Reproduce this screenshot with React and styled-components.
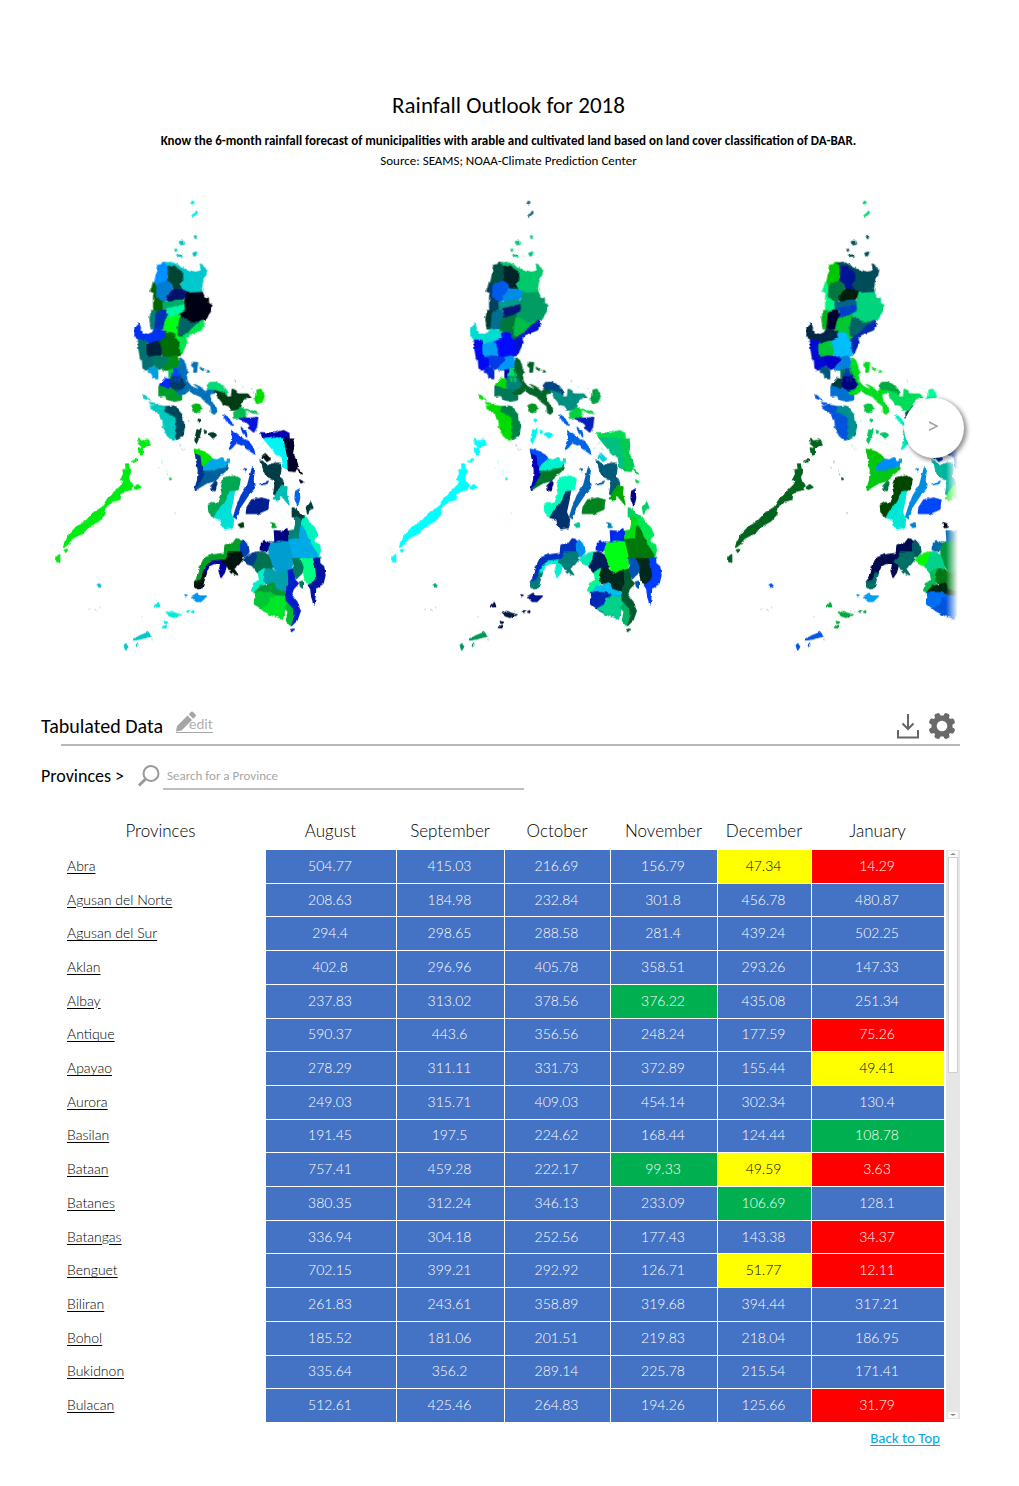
import React from "react";
import styled, { createGlobalStyle } from "styled-components";

const GlobalStyle = createGlobalStyle`
  * { box-sizing: border-box; }
  body {
    margin: 0;
    background: #fff;
    color: #000;
    font-family: Calibri, Carlito, Lato, sans-serif;
  }
`;

const Page = styled.main`
  padding: 89px 59px 36px 41px;
`;

const Intro = styled.header`
  display: flex;
  flex-direction: column;
  align-items: center;
  text-align: center;
  padding-left: 16px;
`;

const Title = styled.h1`
  margin: 0 0 10px;
  font-size: 23px;
  line-height: 32px;
  font-weight: 400;
`;

const Lead = styled.p`
  margin: 0;
  font-size: 13px;
  line-height: 20px;
  font-weight: ${(p) => (p.$strong ? 700 : 400)};
`;

const Carousel = styled.section`
  position: relative;
  margin-top: 19px;
`;

const Track = styled.div`
  display: flex;
  overflow: hidden;
  mask-image: linear-gradient(to right, #000 calc(100% - 14px), transparent calc(100% - 2px));
`;

const MapSvg = styled.svg`
  flex: none;
  width: 336px;
  height: 470px;
  display: block;
`;

const NextButton = styled.button`
  position: absolute;
  right: -4px;
  top: 208px;
  width: 60px;
  height: 60px;
  padding: 0 2px 4px 0;
  border: 0;
  border-radius: 50%;
  background: #fff;
  box-shadow: 2px 2px 4px 1px rgba(0, 0, 0, 0.42);
  color: #a6a6a6;
  font: inherit;
  font-size: 25px;
  line-height: 32px;
`;

const SectionBar = styled.div`
  display: flex;
  align-items: center;
  height: 40px;
  margin-top: 46px;
`;

const SectionTitle = styled.h2`
  margin: 0;
  font-size: 20px;
  line-height: 32px;
  font-weight: 400;
`;

const EditLink = styled.a`
  display: flex;
  align-items: flex-end;
  height: 22px;
  margin: 0 0 8px 13px;
  border-bottom: 1px solid #a6a6a6;
  color: #b0b0b0;
  font-size: 15px;
  line-height: 16px;
  text-decoration: none;
  svg { margin-right: -8px; align-self: flex-start; }
`;

const Tools = styled.div`
  display: flex;
  gap: 8px;
  margin-left: auto;
  padding-right: 4px;
`;

const IconButton = styled.button`
  display: flex;
  padding: 0;
  border: 0;
  background: none;
`;

const Rule = styled.hr`
  margin: -2px 0 0 20px;
  border: 0;
  height: 2px;
  background: #b8b8b8;
`;

const SearchRow = styled.div`
  display: flex;
  align-items: center;
  height: 28px;
  margin-top: 16px;
`;

const SearchLabel = styled.label`
  font-size: 18px;
  line-height: 24px;
`;

const SearchIcon = styled.svg`
  width: 24px;
  height: 24px;
  margin-left: 13px;
`;

const SearchInput = styled.input`
  flex: 0 1 361px;
  height: 28px;
  margin-left: 2px;
  padding: 0 4px;
  border: 0;
  border-bottom: 2px solid #bfbfbf;
  font: inherit;
  font-size: 13px;
  &::placeholder { color: #a6a6a6; opacity: 1; }
`;

const TableArea = styled.div`
  display: flex;
  align-items: flex-end;
  gap: 1px;
  padding-left: 16px;
  margin-top: 24px;
`;

const DataTable = styled.table`
  flex: 1;
  height: 609px;
  table-layout: fixed;
  border-collapse: separate;
  border-spacing: 0;
  font-family: Lato, Carlito, sans-serif;
  font-weight: 300;
`;

const MonthHead = styled.th`
  height: 36px;
  padding: 0 2px 2px 0;
  font-size: 17px;
  line-height: 24px;
  font-weight: 300;
`;

const NameCell = styled.th`
  padding: 0 10px 2px;
  text-align: left;
  font-size: 14px;
  line-height: 16px;
  font-weight: 300;
  a { color: #000; text-underline-offset: 2px; }
`;

const tones = {
  blue: ["#4472c4", "#fff"],
  green: ["#00b050", "#fff"],
  yellow: ["#ffff00", "#000"],
  red: ["#ff0000", "#fff"],
};

const ValueCell = styled.td`
  padding: 0 2px 1px 0;
  border-right: 1px solid #fff;
  border-bottom: 1px solid #fff;
  background: ${(p) => tones[p.$tone][0]};
  color: ${(p) => tones[p.$tone][1]};
  text-align: center;
  font-size: 14px;
  line-height: 16px;
`;

const ScrollBar = styled.div`
  display: flex;
  flex-direction: column;
  width: 14px;
  height: 569px;
  margin-bottom: 4px;
  padding: 1px 2px;
  background: #e6e6e6;
`;

const ScrollThumb = styled.div`
  height: 216px;
  border: 1px solid #d0d0d0;
  background: #fff;
`;

const ScrollArrow = styled.div`
  display: flex;
  align-items: center;
  justify-content: center;
  height: 6px;
  margin-top: ${(p) => (p.$end ? "auto" : 0)};
  background: #fafafa;
  &::before {
    content: "";
    border: solid transparent;
    border-width: 0 3px;
    ${(p) => (p.$end ? "border-top: 2px solid #888;" : "border-bottom: 2px solid #888;")}
  }
`;

const Footer = styled.footer`
  display: flex;
  justify-content: flex-end;
  padding: 5px 20px 0 0;
  a {
    color: #00a8e8;
    font-size: 15px;
    line-height: 20px;
    text-underline-offset: 2px;
  }
`;

/* Each province: outline, then its fill in August, September and October. */
const north = [
  ["M350,226 362,224 366,217 378,219 381,228 382,262 378,274 362,280 346,288 340,284 344,264 348,240Z", "#0090ff", "#005046", "#00c800"],
  ["M374,219 392,217 406,224 420,234 440,240 462,247 474,245 480,236 478,222 484,226 490,236 497,242 494,252 486,262 484,280 481,296 484,310 440,310 430,298 422,297 414,284 416,275 425,262 424,244 410,238 400,228 392,232 382,228Z", "#00c8cc", "#00c86c", "#004c58"],
  ["M382,228 392,232 400,228 410,238 424,244 425,262 416,275 414,284 422,297 408,294 398,297 394,282 379,276 382,262Z", "#004632", "#002428", "#001496"],
  ["M346,288 362,280 378,274 388,280 394,292 392,304 382,318 378,330 366,337 352,328 342,318 344,306Z", "#007cd0", "#005aec", "#007840"],
  ["M338,278 344,286 344,306 342,318 352,328 366,337 368,352 360,362 346,368 342,380 338,352 338,318 340,308 330,304 332,292Z", "#006400", "#004064", "#00f582"],
  ["M392,304 400,297 420,299 434,304 440,318 430,322 424,332 402,332 386,337 379,330 382,318Z", "#00146e", "#008ce6", "#001e0a"],
  ["M366,337 386,337 402,332 424,330 432,336 432,346 406,350 396,354 382,356 372,366 368,360Z", "#00ac66", "#009c8c", "#00648c"],
  ["M382,356 396,352 432,344 434,362 416,374 412,378 400,380 382,386 376,380Z", "#00f5a0", "#001878", "#0040c8"],
  ["M438,310 484,308 490,322 502,324 502,340 512,346 508,364 500,376 494,390 476,394 462,398 448,400 434,388 416,382 418,372 434,364 432,330Z", "#000014", "#009c64", "#00d47c"],
  ["M332,362 342,362 346,372 344,392 340,416 330,416 327,384Z", "#008278", "#003c32", "#00b41e"],
  ["M346,370 362,360 374,362 376,384 370,400 366,416 350,420 342,414 344,392Z", "#0032b4", "#007090", "#000032"],
  ["M376,386 400,380 418,376 418,400 412,414 416,430 426,440 410,452 400,432 376,428 368,416 372,400Z", "#00ff14", "#00783c", "#00c832"],
  ["M418,382 436,388 448,400 478,395 462,408 450,420 426,440 412,436 412,412Z", "#006464", "#00be46", "#006468"],
  ["M486,394 489,408 480,420 460,428 444,434 434,446 438,458 430,474 424,488 416,496 408,486 414,470 410,452 426,440 450,420 464,406Z", "#00e650", "#0014c8", "#0028b4"],
  ["M282,412 293,402 298,412 297,424 306,430 320,434 334,428 340,418 374,424 377,444 366,452 340,456 326,462 314,452 300,450 290,446 282,440Z", "#0032f0", "#00dcd2", "#002846"],
  ["M292,450 314,452 318,464 320,484 328,500 338,510 334,530 326,536 314,540 306,534 304,508 298,502 294,478Z", "#007070", "#000af0", "#000ad2"],
  ["M318,464 326,462 340,456 354,454 364,474 362,492 346,500 326,502 318,484Z", "#002040", "#00a0f0", "#00c832"],
  ["M374,428 398,430 404,446 412,456 414,472 416,496 400,500 384,502 364,498 364,474 354,456 366,450 377,444Z", "#006e00", "#000aff", "#00beff"],
  ["M326,502 346,498 364,500 380,504 384,514 370,530 354,538 340,526 338,512Z", "#007c64", "#003ce6", "#0000c8"],
  ["M384,502 404,498 412,506 414,524 404,534 384,540 364,540 370,528 384,514Z", "#009018", "#0096f5", "#0082dc"],
  ["M326,534 342,530 350,542 350,566 336,564 334,552 322,546Z", "#00a0e0", "#0028dc", "#005a78"],
  ["M384,540 396,538 394,556 392,572 384,562Z", "#00c850", "#0000b4", "#00785a"],
  ["M400,536 414,532 420,548 420,562 402,560 392,556Z", "#0046ff", "#00dc64", "#0041b4"],
  ["M356,584 372,566 386,568 390,586 384,596 366,596Z", "#0028ff", "#00dc00", "#003c3c"],
  ["M392,560 420,562 430,566 438,582 428,598 408,604 392,596 388,582Z", "#003c64", "#008278", "#000082"],
  ["M401,564h4v10h-4ZM412,564h4v10h-4Z", "#0046c8", "#00c85a", "#001e8c"],
  ["M354,588 366,594 386,596 408,604 422,616 420,630 400,634 380,628 372,616 354,618Z", "#009c28", "#007858", "#0070d2"],
  ["M418,504 428,512 436,536 442,548 434,556 440,574 448,588 468,598 492,608 504,596 524,600 530,606 506,612 508,630 520,648 526,666 520,672 512,668 510,648 494,636 480,620 462,612 446,600 430,612 410,612 408,604 428,598 438,582 428,566 420,560 414,532 414,516ZM454,518 470,518 468,530 466,546 458,546 460,534 452,526ZM478,532l10,8-6,1ZM496,542l9,3-6,1ZM462,584 478,592 492,606 474,598Z", "#0072b8", "#006428", "#00dc1e"],
  ["M498,588 506,578 526,577 546,588 556,602 558,614 544,610 526,600 504,596Z", "#00dc78", "#004682", "#00aa3c"],
  ["M520,602 548,610 560,622 572,620 574,598 584,602 590,612 620,612 630,624 606,626 602,640 598,652 580,660 568,660 566,648 548,642 536,626 526,612Z", "#003c14", "#009082", "#00dc5a"],
  ["M648,600 660,598 670,620 662,636 650,640 640,628 648,616Z", "#00dc00", "#00a046", "#00ff96"],
  ["M578,668 598,652 614,660 612,676 616,684 580,684ZM616,658 636,664 654,671 634,668Z", "#00be50", "#00d23c", "#00505a"],
  ["M594,686 610,686 632,684 650,682 648,700 646,712 638,726 626,716 626,704 614,694Z", "#0014dc", "#001ebe", "#00a0a0"],
  ["M454,646 472,640 480,652 476,666 462,668 454,658Z", "#00b414", "#009620", "#00c83c"],
  ["M328,648 350,646 374,650 376,662 392,672 406,684 408,735 404,748 394,750 380,738 368,716 366,690 348,664 332,654Z", "#00c8be", "#00dc00", "#0055dc"],
  ["M376,650 398,648 410,660 422,674 426,692 430,712 424,738 408,748 406,684 392,672 372,664Z", "#00465a", "#008246", "#009090"],
  ["M306,614 316,620 328,630 312,624ZM326,638 342,640 332,644Z", "#00c8be", "#00dc00", "#0055dc"],
  ["M546,676 562,686 576,706 560,696Z", "#0046ff", "#005ae6", "#00f0c8"],
  ["M450,42 454,34 459,36 455,44ZM453,76 460,72 468,62 468,70 458,78Z", "#00ebeb", "#286e82", "#00dc78"],
  ["M415,155 428,154 430,162 420,164ZM460,140 467,141 464,146ZM402,174 407,180 404,184ZM406,196 422,195 423,198 408,199ZM456,190 466,186 466,192 460,200Z", "#00c0c8", "#00c878", "#00505a"],
];

const south = [
  ["M572,32 588,42 604,56 622,64 636,84 642,102 624,90 604,76 586,68 572,84 565,88 576,60ZM600,22 616,38 617,50 606,38ZM558,-2 576,14 564,6Z", "#0040f0", "#0064e6", "#00f0be"],
  ["M656,38 700,40 728,32 744,40 744,54 728,60 700,54 670,56Z", "#0000b4", "#00dc50", "#008cf0"],
  ["M668,56 700,52 728,58 734,80 740,112 742,150 728,142 724,112 706,100 688,80Z", "#00f5f5", "#00c080", "#003cdc"],
  ["M730,56 756,58 758,80 754,100 764,116 770,136 762,154 742,152 740,110 734,80ZM768,146l8,6 8,10-8-4ZM776,180l10,6-6,2Z", "#000028", "#00cc50", "#00dc50"],
  ["M664,108 676,104 688,118 678,124Z", "#001414", "#00d2dc", "#003cb4"],
  ["M660,120 680,138 700,130 718,130 720,148 716,168 728,190 724,204 712,228 698,222 702,196 698,176 680,170 670,156Z", "#003c46", "#005a78", "#00b4a0"],
  ["M712,208 724,196 738,204 736,220 744,254 726,232 718,222 712,240 700,236Z", "#00beb4", "#00aa00", "#50f050"],
  ["M764,214 774,208 776,234 770,258 762,236Z", "#0064eb", "#000082", "#00b4a0"],
  ["M754,264 768,266 774,280 792,292 782,300 764,292 754,290ZM796,262 808,244 816,264 804,270 800,282Z", "#003c3c", "#00d264", "#00b4a0"],
  ["M764,290 784,300 782,320 774,356 742,360 740,334 760,330 764,312Z", "#008274", "#00dc14", "#0078a0"],
  ["M784,298 796,292 806,310 820,322 830,344 818,354 826,370 836,374 838,394 832,416 826,400 812,376 798,350 790,326 780,316Z", "#00f5be", "#00e650", "#00a03c"],
  ["M780,318 790,326 798,350 812,376 830,404 830,416 752,416 746,388 742,360 774,356Z", "#00aae6", "#00780a", "#00a03c"],
  ["M700,332 720,334 722,340 738,326 740,362 716,366 700,370 688,382 676,394 658,390 658,370 670,362 688,370 702,364Z", "#000082", "#0028f0", "#006eaa"],
  ["M690,370 714,364 742,366 748,388 754,416 752,446 728,452 714,464 698,442 684,410 684,388Z", "#009ed0", "#00ff14", "#00963c"],
  ["M690,308 702,312 702,322 694,322Z", "#00a028", "#0082b4", "#000014"],
  ["M586,356 598,362 598,398 562,398 556,412 538,422 510,426 496,440 486,470 482,486 460,486 472,470 478,440 490,414 520,404 550,400 552,376 576,370Z", "#00a028", "#0032c0", "#000a50"],
  ["M598,366 608,360 620,372 624,396 612,410 600,404Z", "#0040b4", "#0090f5", "#005a64"],
  ["M486,462 496,440 512,424 544,420 558,430 550,458 540,472 534,452 540,432 520,430 504,438 494,462Z", "#0000a0", "#00f0d2", "#000a50"],
  ["M562,396 600,396 606,416 592,434 578,446 590,464 570,458 560,440 544,424 558,414ZM462,486 480,484 486,460 496,460 488,484 484,502 470,506 460,496Z", "#001410", "#007d78", "#007064"],
  ["M608,420 624,404 650,396 666,398 648,420 638,438 620,432Z", "#003c8c", "#00ebb4", "#00fa00"],
  ["M650,400 664,396 680,404 696,438 690,448 668,444 650,458 636,440 648,420Z", "#007250", "#001e5a", "#00d28c"],
  ["M652,458 670,446 674,460 666,474 676,486 660,496 642,516 632,512 638,490 656,482Z", "#00f0c8", "#00fa8c", "#00be50"],
  ["M674,448 692,446 712,464 728,454 742,452 742,482 744,492 730,516 712,520 702,506 698,490 682,492 670,480 668,466Z", "#00a0ac", "#00281c", "#007814"],
  ["M642,516 660,498 678,494 698,488 704,508 734,518 736,532 706,528 684,518 660,522Z", "#009838", "#00bef0", "#002810"],
  ["M640,518 684,518 706,528 736,530 738,556 730,570 724,594 700,588 668,572 644,552Z", "#00c832", "#0028b4", "#006ef0"],
  ["M662,566 684,554 690,536 706,528 736,530 738,556 730,570 724,594 700,588Z", "#00e628", "#00d28c", "#0055dc"],
  ["M730,562 744,548 762,574 760,596 748,616 736,602 742,576Z", "#00be30", "#00b464", "#00c8b4"],
  ["M742,452 758,450 762,480 772,490 756,508 752,526 768,546 778,572 768,600 752,616 764,590 758,564 736,542 734,518 744,492ZM748,630l6-2 6,0-8,6Z", "#001ec8", "#005a30", "#005a30"],
  ["M756,416 780,416 790,440 782,460 766,476 758,452ZM776,486l8-2v20l-6-6Z", "#007a5c", "#0055b4", "#0055b4"],
  ["M780,416 816,416 822,440 828,476 806,492 794,486 788,460 790,440Z", "#00ff82", "#00281c", "#00281c"],
  ["M818,416 836,414 836,430 848,440 852,466 846,490 824,506 820,554 812,530 810,508 802,496 828,478 824,440Z", "#0014a0", "#003cff", "#003cff"],
  ["M68,382 72,366 84,344 106,322 132,306 158,278 184,262 198,240 218,220 244,194 250,180 240,178 248,162 246,150 256,148 254,132 262,132 264,146 268,158 262,170 264,180 276,196 272,208 240,216 236,238 212,244 196,258 190,284 172,304 146,318 124,340 100,352 84,370ZM290,54 302,64 322,60 328,74 316,80 308,84 292,70ZM292,84 304,86 304,102 296,106ZM280,202 290,194 300,202 286,208ZM48,410 56,404 56,430 47,424ZM70,390 80,388 74,400ZM272,124 288,118 284,126ZM386,174l5,3-3,4Z", "#00eb14", "#00ffff", "#00641e"],
  ["M462,96 474,98 484,124 486,140 494,162 476,190 464,212 462,206 470,180 472,150Z", "#003296", "#0000be", "#00c814"],
  ["M460,88 484,94 506,106 514,118 492,138 484,134 480,104 462,98Z", "#00e600", "#0050f0", "#00c800"],
  ["M488,150 514,150 530,146 552,142 564,120 560,148 534,168 526,182 498,188 466,208 478,190 494,162Z", "#00609c", "#007828", "#00c814"],
  ["M490,138 514,118 530,120 544,112 550,126 566,122 556,140 530,144 514,150 488,150Z", "#00a8e6", "#00f0d2", "#008cf5"],
  ["M510,198 522,186 528,190 522,212 510,208Z", "#00327c", "#000082", "#007840"],
  ["M548,174 576,166 598,178 592,204 576,216 560,220 552,250 528,276 518,292 504,276 502,256 516,248 534,250 544,220 540,206Z", "#00a852", "#00ffbe", "#004600"],
  ["M566,216 580,214 576,240 568,276 578,300 570,324 552,326 542,312 540,298 520,292 530,274 552,250Z", "#00e0d8", "#00326e", "#00e6d7"],
  ["M634,144 640,146 636,180 640,204 624,222 612,240 596,264 586,296 578,290 586,264 600,228 620,196ZM610,146l6,2-2,6ZM660,192l22-8-4,6-16,4Z", "#003cc8", "#0064b4", "#008ce0"],
  ["M618,262 632,240 660,234 684,240 680,268 652,280 616,280Z", "#001e90", "#008220", "#0046fa"],
  ["M592,314 606,308 608,320 600,322Z", "#003c14", "#00c88c", "#0082d2"],
  ["M468,30 480,26 476,46 466,70 462,58ZM472,-2h3v8h-3ZM504,42 516,38 526,48 518,56ZM490,34l6,4-4,2Z", "#003c28", "#00f5f5", "#00c864"],
  ["M452,530 468,520 476,528 496,528 480,544 466,544ZM432,524l6,2-4,1Z", "#0096f0", "#00148c", "#00a0f0"],
  ["M376,580 392,574 402,580 420,584 400,592 386,588ZM364,622 376,616 376,624ZM342,560 352,548 356,560ZM370,604l8,4-6,2ZM436,576l8-3-3,5ZM452,576l6-4v6Z", "#00ebdc", "#001446", "#00aa3c"],
  ["M278,660 296,648 322,637 328,648 304,656ZM250,676l4-4,6,8-6,10ZM286,678l4-8v10Z", "#00c8c8", "#00965a", "#0055e6"],
  ["M168,496l6-4,6,5-6,4Z", "#00bee6", "#00aa6e", "#0050e6"],
];

/* Islets too small for a solid fill: outline, then the three fills. */
const islets = [
  ["M160,1258l8,3M176,1250v4M144,1256l3,2M330,1348l6,2M300,1280l6-2M422,1268l8-2M346,1232l4,4M410,1262l5,4", "#00bee6", "#00966e", "#3c78e6"],
  ["M360,816l6,2M372,842l6,2M400,969l8,1M352,832l4,2M378,850l3,6", "#00eb14", "#00ffff", "#00641e"],
  ["M416,762l3,8M422,776l6,6M430,774l3,4", "#5064c8", "#5a46e6", "#50dc50"],
  ["M444,690l3,4M472,688l4,3M494,722l4,4", "#003c28", "#00f5f5", "#00c864"],
  ["M660,764l6-6M666,788l8,4M650,776l5-4M672,774l8,6", "#00f5f5", "#00c080", "#003cdc"],
  ["M630,594l4,4M636,606l4,3M582,570l2,6M604,590l3,3", "#003c14", "#009082", "#00dc5a"],
];

const MONTHS = ["August", "September", "October", "November", "December", "January"];

function RainfallMap({ month }) {
  const draw = (shapes) =>
    shapes.map((s, i) => (
      <path key={i} d={s[0]} fill={s[month + 1]} stroke={s[month + 1]} />
    ));
  const coast = `coast-${month}`;
  return (
    <MapSvg viewBox="0 0 1008 1410" role="img" aria-label={`Rainfall map, ${MONTHS[month]}`}>
      <filter id={coast} x="0" y="0" width="1008" height="1410" filterUnits="userSpaceOnUse" colorInterpolationFilters="sRGB">
        <feTurbulence type="fractalNoise" baseFrequency="0.06" numOctaves="2" seed="4" result="noise" />
        <feDisplacementMap in="SourceGraphic" in2="noise" scale="9" xChannelSelector="R" yChannelSelector="G" />
      </filter>
      <g filter={`url(#${coast})`} strokeWidth="4" strokeLinejoin="round">
        <g>{draw(north)}</g>
        <g transform="translate(0 690)">{draw(south)}</g>
        <g strokeWidth="3" strokeOpacity="0.45">{draw(islets)}</g>
      </g>
    </MapSvg>
  );
}

const rows = [
  ["Abra", "504.77", "415.03", "216.69", "156.79", "47.34 yellow", "14.29 red"],
  ["Agusan del Norte", "208.63", "184.98", "232.84", "301.8", "456.78", "480.87"],
  ["Agusan del Sur", "294.4", "298.65", "288.58", "281.4", "439.24", "502.25"],
  ["Aklan", "402.8", "296.96", "405.78", "358.51", "293.26", "147.33"],
  ["Albay", "237.83", "313.02", "378.56", "376.22 green", "435.08", "251.34"],
  ["Antique", "590.37", "443.6", "356.56", "248.24", "177.59", "75.26 red"],
  ["Apayao", "278.29", "311.11", "331.73", "372.89", "155.44", "49.41 yellow"],
  ["Aurora", "249.03", "315.71", "409.03", "454.14", "302.34", "130.4"],
  ["Basilan", "191.45", "197.5", "224.62", "168.44", "124.44", "108.78 green"],
  ["Bataan", "757.41", "459.28", "222.17", "99.33 green", "49.59 yellow", "3.63 red"],
  ["Batanes", "380.35", "312.24", "346.13", "233.09", "106.69 green", "128.1"],
  ["Batangas", "336.94", "304.18", "252.56", "177.43", "143.38", "34.37 red"],
  ["Benguet", "702.15", "399.21", "292.92", "126.71", "51.77 yellow", "12.11 red"],
  ["Biliran", "261.83", "243.61", "358.89", "319.68", "394.44", "317.21"],
  ["Bohol", "185.52", "181.06", "201.51", "219.83", "218.04", "186.95"],
  ["Bukidnon", "335.64", "356.2", "289.14", "225.78", "215.54", "171.41"],
  ["Bulacan", "512.61", "425.46", "264.83", "194.26", "125.66", "31.79 red"],
];

const columnWidths = [209, 131, 108, 106, 107, 94, 133];

export default function App() {
  return (
    <>
      <GlobalStyle />
      <Page id="top">
        <Intro>
          <Title>Rainfall Outlook for 2018</Title>
          <Lead $strong>
            Know the 6-month rainfall forecast of municipalities with arable and cultivated land
            based on land cover classification of DA-BAR.
          </Lead>
          <Lead>Source: SEAMS; NOAA-Climate Prediction Center</Lead>
        </Intro>

        <Carousel aria-label="Monthly rainfall maps">
          <Track>
            <RainfallMap month={0} />
            <RainfallMap month={1} />
            <RainfallMap month={2} />
          </Track>
          <NextButton type="button" aria-label="Next month">&gt;</NextButton>
        </Carousel>

        <SectionBar>
          <SectionTitle>Tabulated Data</SectionTitle>
          <EditLink href="#edit">
            <svg width="21" height="21" viewBox="0 0 21 21" fill="#a6a6a6" aria-hidden="true">
              <path d="M0 20.5 1 15 11.5 4.500 16 9 5.500 19.500ZM12.700 3.300 15.200.8Q16 0 16.800.8L19.700 3.700Q20.500 4.500 19.700 5.300L17.200 7.800Z" />
            </svg>
            edit
          </EditLink>
          <Tools>
            <IconButton type="button" aria-label="Download">
              <svg width="24" height="28" viewBox="0 0 24 28" fill="none" stroke="#666" strokeWidth="2">
                <path d="M12 2V17M6.500 11.500 12 17 17.500 11.500M2 18V25.500H22V18" />
              </svg>
            </IconButton>
            <IconButton type="button" aria-label="Settings">
              <svg width="28" height="28" viewBox="0 0 28 28" fill="#6a6a6a">
                <path
                  fillRule="evenodd"
                  d="M9.500 1.200Q11 .6 11.700 2L12.500 3.500H15.500L16.300 2Q17 .6 18.500 1.200L20.600 2.100Q22 2.800 21.400 4.200L20.900 5.800 22.200 7.100 23.800 6.600Q25.200 6 25.900 7.400L26.800 9.500Q27.400 11 26 11.700L24.500 12.500V15.500L26 16.300Q27.400 17 26.800 18.500L25.900 20.600Q25.200 22 23.800 21.400L22.200 20.900 20.900 22.200 21.400 23.800Q22 25.200 20.600 25.900L18.500 26.800Q17 27.400 16.300 26L15.500 24.500H12.500L11.700 26Q11 27.400 9.500 26.800L7.400 25.900Q6 25.200 6.600 23.800L7.100 22.200 5.800 20.900 4.200 21.400Q2.800 22 2.100 20.600L1.200 18.500Q.6 17 2 16.300L3.500 15.500V12.500L2 11.700Q.6 11 1.200 9.500L2.100 7.400Q2.800 6 4.200 6.600L5.800 7.100 7.100 5.800 6.600 4.200Q6 2.800 7.400 2.100ZM14 8.700A5.300 5.300 0 1 0 14 19.300A5.300 5.300 0 1 0 14 8.700Z"
                />
              </svg>
            </IconButton>
          </Tools>
        </SectionBar>
        <Rule />

        <SearchRow>
          <SearchLabel htmlFor="province">Provinces &gt;</SearchLabel>
          <SearchIcon viewBox="0 0 24 24" fill="none" stroke="#999" aria-hidden="true">
            <circle cx="14" cy="9.500" r="7.500" strokeWidth="2" />
            <path d="M8.500 15 2 21.500" strokeWidth="3" />
          </SearchIcon>
          <SearchInput id="province" type="text" placeholder="Search for a Province" />
        </SearchRow>

        <TableArea>
          <DataTable>
            <colgroup>
              {columnWidths.map((w, i) => <col key={i} width={w} />)}
            </colgroup>
            <thead>
              <tr>
                <MonthHead scope="col">Provinces</MonthHead>
                {MONTHS.map((m) => <MonthHead key={m} scope="col">{m}</MonthHead>)}
              </tr>
            </thead>
            <tbody>
              {rows.map(([name, ...values]) => (
                <tr key={name}>
                  <NameCell scope="row"><a href={`#${name}`}>{name}</a></NameCell>
                  {values.map((v, i) => {
                    const [value, tone = "blue"] = v.split(" ");
                    return <ValueCell key={i} $tone={tone}>{value}</ValueCell>;
                  })}
                </tr>
              ))}
            </tbody>
          </DataTable>
          <ScrollBar aria-hidden="true">
            <ScrollArrow />
            <ScrollThumb />
            <ScrollArrow $end />
          </ScrollBar>
        </TableArea>

        <Footer><a href="#top">Back to Top</a></Footer>
      </Page>
    </>
  );
}
